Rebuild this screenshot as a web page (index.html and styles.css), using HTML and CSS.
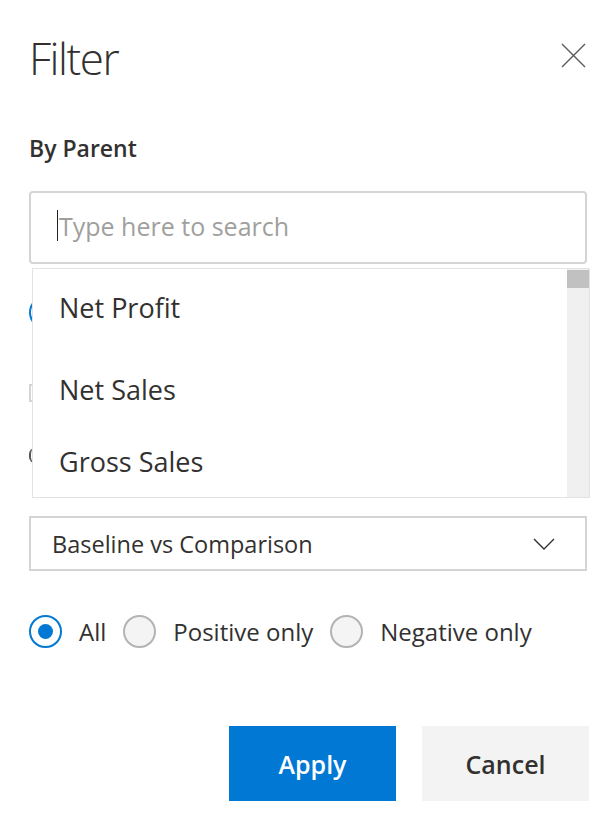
FILE: index.html
```html
<!DOCTYPE html>
<html lang="en">
<head>
<meta charset="utf-8">
<title>Filter</title>
<link rel="stylesheet" href="styles.css">
</head>
<body>
<div class="panel">
  <div class="header">
    <h1 class="title">Filter</h1>
    <button class="close" aria-label="Close">
      <svg width="25" height="25" viewBox="0 0 25 25"><path d="M1 1 L24 24 M24 1 L1 24" stroke="#5a5a5a" stroke-width="1.4" fill="none"/></svg>
    </button>
  </div>

  <div class="section-label">By Parent</div>

  <div class="search-wrap">
    <div class="search-box">
      <span class="caret"></span><span class="placeholder">Type here to search</span>
    </div>
    <div class="dropdown">
      <ul class="options">
        <li class="option option-first">Net Profit</li>
        <li class="option">Net Sales</li>
        <li class="option">Gross Sales</li>
      </ul>
      <div class="scrollbar"><div class="thumb"></div></div>
    </div>
  </div>

  <div class="under-radios">
    <span class="radio checked"></span>
  </div>
  <div class="under-limit"></div>
  <div class="under-label"></div>

  <div class="select">
    <span class="select-text">Baseline vs Comparison</span>
    <svg class="chevron" width="22" height="12" viewBox="0 0 22 12"><path d="M1 1 L11 11 L21 1" stroke="#323130" stroke-width="1.4" fill="none"/></svg>
  </div>

  <div class="radio-row">
    <label class="radio-item"><span class="radio checked"></span><span class="radio-text">All</span></label>
    <label class="radio-item"><span class="radio"></span><span class="radio-text">Positive only</span></label>
    <label class="radio-item"><span class="radio"></span><span class="radio-text">Negative only</span></label>
  </div>

  <div class="actions">
    <button class="btn btn-primary">Apply</button>
    <button class="btn btn-default">Cancel</button>
  </div>
</div>
</body>
</html>
```
FILE: styles.css
```css
* { box-sizing: border-box; }
html, body { margin: 0; padding: 0; background: #ffffff; }
body {
  font-family: "Open Sans", "Noto Sans", sans-serif;
  color: #323130;
}
.panel {
  padding: 35px 26px 0 29px;
}
.header {
  display: flex;
  justify-content: space-between;
  align-items: flex-start;
  height: 46px;
}
.title {
  margin: 0;
  font-size: 44px;
  line-height: 46px;
  font-weight: 300;
  letter-spacing: -1.5px;
  color: #323130;
}
.close {
  margin-top: 8px;
  margin-right: 1px;
  padding: 0;
  border: 0;
  background: transparent;
  width: 25px;
  height: 25px;
  display: block;
}
.close svg { display: block; }
.section-label {
  margin-top: 52px;
  font-size: 23px;
  line-height: 30px;
  font-weight: 600;
  color: #323130;
}
.search-wrap {
  position: relative;
  margin-top: 28px;
}
.search-box {
  height: 73px;
  border: 2px solid #d4d4d4;
  border-radius: 4px;
  display: flex;
  align-items: center;
  padding-left: 26px;
  padding-bottom: 4px;
}
.caret {
  display: inline-block;
  width: 0;
  height: 31px;
  border-left: 1.5px solid #222;
  margin-right: 1px;
}
.placeholder {
  font-size: 25px;
  color: #a19f9d;
}
.dropdown {
  position: absolute;
  top: calc(100% + 4px);
  left: 3px;
  right: -3px;
  height: 230px;
  background: #ffffff;
  border: 1px solid #e3e3e3;
  display: flex;
  z-index: 10;
}
.options {
  list-style: none;
  margin: 0;
  padding: 3px 0 0 26px;
  flex: 1;
}
.option {
  font-size: 27px;
  line-height: 36px;
  padding: 18px 0;
  color: #323130;
}
.option-first { margin-bottom: 10px; }
.scrollbar {
  width: 22px;
  background: #f0f0f0;
  padding-top: 1px;
}
.thumb {
  height: 18px;
  background: #c1c1c1;
}
.under-radios {
  margin-top: 31px;
  height: 34px;
  display: flex;
  align-items: center;
}
.under-limit {
  margin-top: 55px;
  width: 80px;
  height: 18px;
  border: 2px solid #d4d4d4;
}
.under-label {
  margin-top: 46px;
  width: 14px;
  height: 15px;
  border-left: 2px solid #555;
  border-radius: 6px 0 0 6px;
}
.select {
  margin-top: 53px;
  height: 55px;
  border: 2px solid #d4d4d4;
  display: flex;
  align-items: center;
  justify-content: space-between;
  padding: 0 30px 0 21px;
}
.select-text {
  font-size: 23.5px;
  color: #323130;
}
.chevron { display: block; }
.radio-row {
  margin-top: 43px;
  height: 34px;
  display: flex;
  align-items: center;
  gap: 17px;
}
.radio-item {
  display: flex;
  align-items: center;
  gap: 17px;
}
.radio {
  width: 33px;
  height: 33px;
  border-radius: 50%;
  border: 2px solid #b3b3b3;
  background: #f4f4f4;
  display: flex;
  align-items: center;
  justify-content: center;
  flex: none;
}
.radio.checked {
  border-color: #0078d4;
  background: #ffffff;
}
.radio.checked::after {
  content: "";
  width: 15px;
  height: 15px;
  border-radius: 50%;
  background: #0078d4;
}
.radio-text {
  font-size: 24px;
  color: #323130;
}
.actions {
  margin-top: 78px;
  margin-right: -2px;
  display: flex;
  justify-content: flex-end;
  gap: 26px;
}
.btn {
  width: 167px;
  height: 75px;
  border: 0;
  font-family: "Open Sans", "Noto Sans", sans-serif;
  font-size: 25px;
  font-weight: 600;
  padding: 0;
}
.btn-primary {
  background: #0078d4;
  color: #ffffff;
}
.btn-default {
  background: #f3f3f3;
  color: #323130;
}
```
